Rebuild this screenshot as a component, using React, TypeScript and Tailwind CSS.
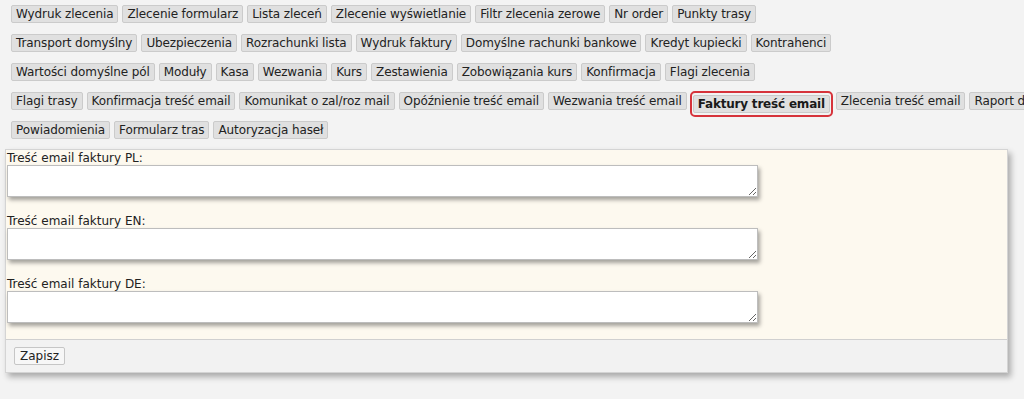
const rows: string[][] = [
  ['Wydruk zlecenia', 'Zlecenie formularz', 'Lista zleceń', 'Zlecenie wyświetlanie', 'Filtr zlecenia zerowe', 'Nr order', 'Punkty trasy'],
  ['Transport domyślny', 'Ubezpieczenia', 'Rozrachunki lista', 'Wydruk faktury', 'Domyślne rachunki bankowe', 'Kredyt kupiecki', 'Kontrahenci'],
  ['Wartości domyślne pól', 'Moduły', 'Kasa', 'Wezwania', 'Kurs', 'Zestawienia', 'Zobowiązania kurs', 'Konfirmacja', 'Flagi zlecenia'],
  ['Flagi trasy', 'Konfirmacja treść email', 'Komunikat o zal/roz mail', 'Opóźnienie treść email', 'Wezwania treść email', 'Faktury treść email', 'Zlecenia treść email', 'Raport dla klienta'],
  ['Powiadomienia', 'Formularz tras', 'Autoryzacja haseł'],
];

const active = 'Faktury treść email';

const fields = ['Treść email faktury PL:', 'Treść email faktury EN:', 'Treść email faktury DE:'];

function TabButton({ label }: { label: string }) {
  if (label === active) {
    return (
      <span className="-mx-[1px] -mt-[1px] -mb-[7px] rounded-[5px] border-2 border-[#d6333b] px-[1px] pt-[2px] pb-[2px]">
        <button className="h-[18px] rounded-[2px] border border-[#cbcbcb] bg-[#e0e0e0] px-[4px] font-bold leading-[16px] tracking-[-0.2px] text-[#1a1a1a] whitespace-nowrap">
          {label}
        </button>
      </span>
    );
  }
  return (
    <button className="h-[18px] rounded-[2px] border border-[#cbcbcb] bg-[#e0e0e0] px-[4px] leading-[16px] tracking-[-0.1px] text-[#222] whitespace-nowrap">
      {label}
    </button>
  );
}

export default function App() {
  return (
    <div className="h-[399px] w-[1024px] overflow-hidden bg-[#f3f3f3] text-[12px] text-[#222] font-['DejaVu_Sans',sans-serif]">
      <div className="flex flex-col gap-[11px] pl-[11px] pt-[5px]">
        {rows.map((row, i) => (
          <div key={i} className="flex items-center gap-[4px] whitespace-nowrap">
            {row.map((label) => (
              <TabButton key={label} label={label} />
            ))}
          </div>
        ))}
      </div>

      <div className="mx-[5px] mt-[10px] w-[1003px] border border-[#d4d4d4] bg-[#fdf9ef] shadow-[3px_4px_6px_rgba(0,0,0,0.3)]">
        <div className="flex flex-col gap-[17px] px-[1px] pt-[1px] pb-[16px]">
          {fields.map((label) => (
            <div key={label} className="flex flex-col">
              <label className="leading-[14px] text-[#222]">{label}</label>
              <textarea className="h-[32px] w-[751px] resize border border-[#bdbdbd] bg-white shadow-[2px_3px_4px_rgba(0,0,0,0.35)] outline-none" />
            </div>
          ))}
        </div>
        <div className="border-t border-[#d0d0d0] bg-[#f2f2f2] px-[8px] py-[7px]">
          <button className="h-[18px] rounded-[2px] border border-[#c6c6c6] bg-[#f7f7f7] px-[5px] leading-[16px] text-[#222]">
            Zapisz
          </button>
        </div>
      </div>
    </div>
  );
}
